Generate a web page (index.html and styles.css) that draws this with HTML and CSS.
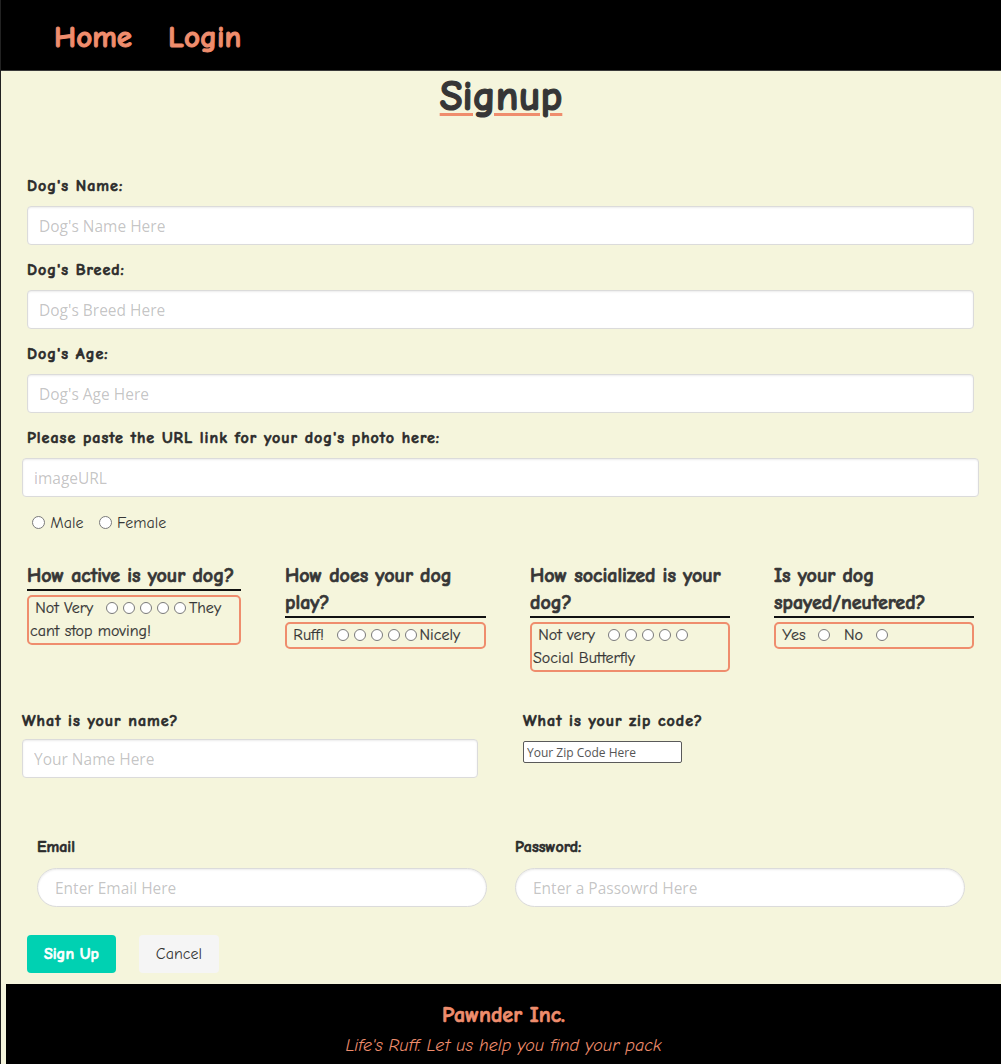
FILE: index.html
```html
<!DOCTYPE html>
<html lang="en">
<head>
<meta charset="utf-8">
<title>Pawnder - Signup</title>
<link rel="stylesheet" href="styles.css">
</head>
<body>
<nav class="topnav">
  <a class="navlink" href="#">Home</a>
  <a class="navlink" href="#">Login</a>
</nav>
<main class="page">
  <h1 class="title">Signup</h1>
  <form class="form">
    <div class="field">
      <label class="label">Dog's Name:</label>
      <input class="input" type="text" placeholder="Dog's Name Here">
    </div>
    <div class="field">
      <label class="label">Dog's Breed:</label>
      <input class="input" type="text" placeholder="Dog's Breed Here">
    </div>
    <div class="field">
      <label class="label">Dog's Age:</label>
      <input class="input" type="text" placeholder="Dog's Age Here">
    </div>
    <div class="field">
      <label class="label">Please paste the URL link for your dog's photo here:</label>
      <input class="input input-wide" type="text" placeholder="imageURL">
    </div>
    <div class="sex-row">
      <label class="sex-option"><input class="radio" type="radio" name="sex"> Male</label>
      <label class="sex-option"><input class="radio" type="radio" name="sex"> Female</label>
    </div>
    <div class="questions">
      <div class="question">
        <h3 class="q-title">How active is your dog?</h3>
        <div class="q-box">&nbsp;Not Very&nbsp;&nbsp;<input class="dot" type="radio" name="active"><input class="dot" type="radio" name="active"><input class="dot" type="radio" name="active"><input class="dot" type="radio" name="active"><input class="dot" type="radio" name="active">They<br>cant stop moving!</div>
      </div>
      <div class="question">
        <h3 class="q-title">How does your dog play?</h3>
        <div class="q-box">&nbsp;Ruff!&nbsp;&nbsp;<input class="dot" type="radio" name="play"><input class="dot" type="radio" name="play"><input class="dot" type="radio" name="play"><input class="dot" type="radio" name="play"><input class="dot" type="radio" name="play">Nicely</div>
      </div>
      <div class="question">
        <h3 class="q-title">How socialized is your dog?</h3>
        <div class="q-box">&nbsp;Not very&nbsp;&nbsp;<input class="dot" type="radio" name="social"><input class="dot" type="radio" name="social"><input class="dot" type="radio" name="social"><input class="dot" type="radio" name="social"><input class="dot" type="radio" name="social"><br>Social Butterfly</div>
      </div>
      <div class="question">
        <h3 class="q-title">Is your dog spayed/neutered?</h3>
        <div class="q-box">&nbsp;Yes&nbsp;&nbsp;<input class="dot" type="radio" name="fixed">&nbsp;&nbsp;No&nbsp;&nbsp;<input class="dot" type="radio" name="fixed"></div>
      </div>
    </div>
    <div class="owner-row">
      <div class="owner-col">
        <label class="label label-owner">What is your name?</label>
        <input class="input" type="text" placeholder="Your Name Here">
      </div>
      <div class="owner-col">
        <label class="label label-owner">What is your zip code?</label>
        <input class="zip-input" type="text" placeholder="Your Zip Code Here">
      </div>
    </div>
    <div class="account-row">
      <div class="account-col">
        <label class="label">Email</label>
        <input class="input input-rounded" type="email" placeholder="Enter Email Here">
      </div>
      <div class="account-col">
        <label class="label">Password:</label>
        <input class="input input-rounded" type="password" placeholder="Enter a Passowrd Here">
      </div>
    </div>
    <div class="buttons">
      <button class="btn btn-primary" type="button">Sign Up</button>
      <button class="btn btn-light" type="button">Cancel</button>
    </div>
  </form>
</main>
<footer class="footer">
  <p class="footer-title">Pawnder Inc.</p>
  <p class="footer-tag">Life's Ruff. Let us help you find your pack</p>
</footer>
</body>
</html>
```
FILE: styles.css
```css
html {
  background: #f5f5dc;
}
body {
  margin: 0;
  background: #f5f5dc;
  border-left: 1px solid #222;
  font-family: "Comic Sans MS", "Comic Neue", Lato, sans-serif;
  color: #363636;
}

.topnav {
  height: 71px;
  box-sizing: border-box;
  padding: 4px 0 0 53px;
  background: #000;
  border-bottom: 1px solid #3a3a3a;
  display: flex;
  align-items: center;
  gap: 36px;
}
.navlink {
  color: #ef8d6d;
  text-decoration: none;
  font-weight: 700;
  font-size: 31px;
  line-height: 36px;
  -webkit-text-stroke: 1px #ef8d6d;
}

.page {
  display: block;
}
.title {
  margin: 1px 0 0;
  text-align: center;
  font-size: 42px;
  line-height: 50px;
  font-weight: 700;
  color: #363636;
  -webkit-text-stroke: 1.2px #363636;
  text-decoration: underline;
  text-decoration-color: #ef8d6d;
  text-decoration-thickness: 3px;
  text-underline-offset: 3px;
}

.form {
  padding: 53px 27px 0 26px;
}
.field {
  margin-bottom: 14px;
}
.label {
  display: block;
  font-size: 16px;
  line-height: 22px;
  font-weight: 700;
  letter-spacing: 1px;
  color: #2b2b2b;
  -webkit-text-stroke: 0.6px #2b2b2b;
  margin-bottom: 9px;
}
.input {
  display: block;
  box-sizing: border-box;
  width: 100%;
  height: 39px;
  margin: 0;
  padding: 0 11px;
  background: #fff;
  border: 1px solid #dbdbdb;
  border-radius: 4px;
  box-shadow: inset 0 1px 2px rgba(10, 10, 10, 0.08);
  font-family: "Open Sans", sans-serif;
  font-size: 15.5px;
  color: #363636;
}
.input::placeholder {
  color: rgba(54, 54, 54, 0.3);
}
.input-wide {
  width: calc(100% + 10px);
  margin-left: -5px;
}
.input-rounded {
  border-radius: 20px;
  padding-left: 17px;
}

.sex-row {
  height: 24px;
  margin-top: 4px;
  display: flex;
  align-items: center;
  font-size: 16px;
}
.sex-option {
  margin-right: 10px;
}
.radio {
  appearance: none;
  -webkit-appearance: none;
  box-sizing: border-box;
  width: 13px;
  height: 13px;
  margin: 0 0 0 5px;
  border: 1px solid #7a7a7a;
  border-radius: 50%;
  background: #fff;
  vertical-align: -1px;
}

.questions {
  margin-top: 27px;
  display: grid;
  grid-template-columns: 214px 201px 200px 200px;
  column-gap: 44px;
  align-items: start;
}
.q-title {
  margin: 0;
  font-size: 20px;
  line-height: 27px;
  font-weight: 700;
  color: #363636;
  -webkit-text-stroke: 0.7px #363636;
  border-bottom: 2px solid #111;
}
.q-box {
  margin-top: 4px;
  border: 2px solid #ef8d6d;
  border-radius: 5px;
  padding: 0 1px;
  font-size: 16px;
  line-height: 23px;
  color: #363636;
  -webkit-text-stroke: 0.2px #363636;
}
.dot {
  appearance: none;
  -webkit-appearance: none;
  box-sizing: border-box;
  width: 12px;
  height: 12px;
  margin: 0 3px 0 2px;
  border: 1px solid #7a7a7a;
  border-radius: 50%;
  background: #fff;
  vertical-align: -1px;
}

.owner-row {
  margin: 38px 0 0 -5px;
  display: grid;
  grid-template-columns: 456px 1fr;
  column-gap: 45px;
}
.label-owner {
  margin-bottom: 7px;
}
.zip-input {
  display: block;
  box-sizing: border-box;
  width: 159px;
  height: 22px;
  margin: 9px 0 0;
  padding: 0 3px;
  border: 1px solid #5a5a5a;
  border-radius: 2px;
  background: #fff;
  font-family: "Open Sans", sans-serif;
  font-size: 12px;
}
.zip-input::placeholder {
  color: #555;
}

.account-row {
  margin-top: 58px;
  padding-left: 10px;
  display: grid;
  grid-template-columns: 450px 450px;
  column-gap: 28px;
}
.account-row .label {
  margin-bottom: 10px;
  letter-spacing: 0;
}

.buttons {
  margin-top: 28px;
  display: flex;
  gap: 23px;
}
.btn {
  height: 38px;
  padding: 0 17px;
  border: 0;
  border-radius: 4px;
  font-family: "Comic Sans MS", "Comic Neue", Lato, sans-serif;
  font-size: 16px;
}
.btn-primary {
  background: #00d1b2;
  color: #fff;
  font-weight: 700;
  -webkit-text-stroke: 0.6px #fff;
}
.btn-light {
  background: #f5f5f5;
  color: #363636;
}

.footer {
  margin: 11px 0 0 5px;
  height: 80px;
  box-sizing: border-box;
  padding-top: 19px;
  background: #000;
  text-align: center;
  color: #ef8d6d;
}
.footer-title {
  margin: 0;
  font-size: 22px;
  line-height: 25px;
  font-weight: 700;
  -webkit-text-stroke: 0.7px #ef8d6d;
}
.footer-tag {
  margin: 8px 0 0;
  font-size: 18px;
  line-height: 20px;
  font-style: italic;
}
```
